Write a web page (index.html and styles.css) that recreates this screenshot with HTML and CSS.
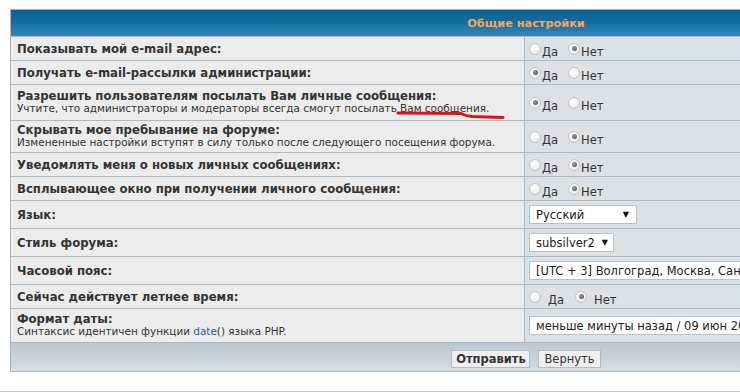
FILE: index.html
```html
<!DOCTYPE html>
<html lang="ru">
<head>
<meta charset="utf-8">
<link rel="stylesheet" href="styles.css">
</head>
<body>
<table class="settings">
  <colgroup><col class="c1"><col class="c2"></colgroup>
  <tr class="h26"><th colspan="2" class="head">Общие настройки</th></tr>
  <tr class="h23">
    <td class="lbl"><b>Показывать мой e-mail адрес:</b></td>
    <td class="val"><span class="opt"><span class="radio"></span>Да</span><span class="opt"><span class="radio on"></span>Нет</span></td>
  </tr>
  <tr class="h23">
    <td class="lbl"><b>Получать e-mail-рассылки администрации:</b></td>
    <td class="val"><span class="opt"><span class="radio on"></span>Да</span><span class="opt"><span class="radio"></span>Нет</span></td>
  </tr>
  <tr class="h35">
    <td class="lbl"><b>Разрешить пользователям посылать Вам личные сообщения:</b><br><span class="explain">Учтите, что администраторы и модераторы всегда смогут посылать Вам сообщения.</span></td>
    <td class="val"><span class="opt"><span class="radio on"></span>Да</span><span class="opt"><span class="radio"></span>Нет</span></td>
  </tr>
  <tr class="h31">
    <td class="lbl"><b>Скрывать мое пребывание на форуме:</b><br><span class="explain">Измененные настройки вступят в силу только после следующего посещения форума.</span></td>
    <td class="val"><span class="opt"><span class="radio"></span>Да</span><span class="opt"><span class="radio on"></span>Нет</span></td>
  </tr>
  <tr class="h23">
    <td class="lbl"><b>Уведомлять меня о новых личных сообщениях:</b></td>
    <td class="val"><span class="opt"><span class="radio"></span>Да</span><span class="opt"><span class="radio on"></span>Нет</span></td>
  </tr>
  <tr class="h23">
    <td class="lbl"><b>Всплывающее окно при получении личного сообщения:</b></td>
    <td class="val"><span class="opt"><span class="radio"></span>Да</span><span class="opt"><span class="radio on"></span>Нет</span></td>
  </tr>
  <tr class="h27">
    <td class="lbl"><b>Язык:</b></td>
    <td class="val"><span class="select lang">Русский<span class="arrow">▼</span></span></td>
  </tr>
  <tr class="h27">
    <td class="lbl"><b>Стиль форума:</b></td>
    <td class="val"><span class="select style">subsilver2<span class="arrow">▼</span></span></td>
  </tr>
  <tr class="h27">
    <td class="lbl"><b>Часовой пояс:</b></td>
    <td class="val"><span class="select wide">[UTC + 3] Волгоград, Москва, Санкт-Петербург</span></td>
  </tr>
  <tr class="h23">
    <td class="lbl"><b>Сейчас действует летнее время:</b></td>
    <td class="val"><span class="opt spaced"><span class="radio"></span>Да</span><span class="opt spaced"><span class="radio on"></span>Нет</span></td>
  </tr>
  <tr class="h33">
    <td class="lbl"><b>Формат даты:</b><br><span class="explain">Синтаксис идентичен функции <a class="link">date</a>() языка PHP.</span></td>
    <td class="val"><span class="select wide date">меньше минуты назад / 09 июн 2014, 12:00</span></td>
  </tr>
  <tr class="h28">
    <td colspan="2" class="foot"><span class="btn main">Отправить</span><span class="btn">Вернуть</span></td>
  </tr>
</table>
<div class="rule"></div>
<svg class="mark" width="740" height="392" viewBox="0 0 740 392"><path d="M398 113 L461 113.5 Q466 116 472 116.5 L503 117.5" fill="none" stroke="#d8141a" stroke-width="3" stroke-linecap="round"/></svg>
</body>
</html>
```

FILE: styles.css
```css
html, body {
  margin: 0;
  overflow: hidden;
  background: #ffffff;
}
body {
  position: relative;
  width: 740px;
  height: 392px;
  padding: 9px 0 0 10px;
  box-sizing: border-box;
  font-family: "DejaVu Sans", Verdana, sans-serif;
  color: #333333;
}
.settings {
  width: 1032px;
  border-collapse: separate;
  border-spacing: 1px;
  background: #a9b8c2;
  table-layout: fixed;
}
.c1 { width: 513px; }
.c2 { width: auto; }
.settings td, .settings th {
  box-sizing: border-box;
  padding: 0;
}
.h26 th { height: 26px; }
.h23 td { height: 23px; }
.h27 td { height: 27px; }
.h28 td { height: 28px; }
.h31 td { height: 31px; }
.h33 td { height: 33px; }
.h35 td { height: 35px; }
.head {
  background: linear-gradient(#08608f 0%, #136fa2 50%, #3587b8 100%);
  color: #ffa34f;
  font-size: 11.3px;
  font-weight: bold;
  text-align: center;
}
.lbl {
  background: #ececec;
  padding-left: 6px !important;
  font-size: 11.7px;
  line-height: 12px;
  color: #333333;
  vertical-align: middle;
  white-space: nowrap;
  overflow: hidden;
}
.explain {
  font-size: 10.45px;
  line-height: 13px;
  color: #333333;
}
.link {
  color: #1d5f91;
}
.val {
  background: #dce1e5;
  padding-left: 4px !important;
  vertical-align: middle;
  font-size: 11.5px;
  color: #333333;
  white-space: nowrap;
  overflow: hidden;
}
.opt {
  display: inline-flex;
  align-items: flex-end;
  margin-right: 10px;
  position: relative;
  top: 2px;
}
.opt.spaced {
  margin-right: 11px;
}
.opt.spaced .radio {
  margin-right: 7px;
}
.radio {
  width: 10px;
  height: 10px;
  border: 1px solid #c2c6c9;
  border-radius: 50%;
  background: radial-gradient(circle at 40% 35%, #ffffff 0%, #eef0f1 60%, #d6d9db 100%);
  margin-right: 1px;
  margin-bottom: 4px;
  position: relative;
}
.radio.on::after {
  content: "";
  position: absolute;
  left: 2.5px;
  top: 2.5px;
  width: 5px;
  height: 5px;
  border-radius: 50%;
  background: radial-gradient(circle at 40% 35%, #9a9a9a 0%, #4a4a4a 100%);
}
.select {
  display: inline-flex;
  align-items: center;
  box-sizing: border-box;
  height: 19px;
  padding-left: 6px;
  background: #ffffff;
  border: 1px solid #b6c1c9;
  font-size: 11.5px;
  color: #222222;
  white-space: nowrap;
  vertical-align: middle;
}
.select.lang {
  width: 108px;
  justify-content: space-between;
  padding-right: 7px;
}
.select.style {
  width: 85px;
  justify-content: space-between;
  padding-right: 5px;
}
.arrow {
  font-size: 8px;
  color: #111111;
}
.select.wide {
  width: 500px;
}
.foot {
  background: linear-gradient(#bfc8d0 0%, #cbd3d9 60%, #d7dde2 100%);
  text-align: center;
  vertical-align: middle;
}
.btn {
  display: inline-block;
  box-sizing: border-box;
  height: 18px;
  line-height: 16px;
  padding: 0 5px;
  margin: 0 4px;
  background: #efefef;
  border: 1px solid #b3bcc3;
  font-size: 11.5px;
  color: #333333;
  position: relative;
  top: 1px;
}
.btn.main {
  font-weight: bold;
  width: 79px;
  padding: 0;
}
.rule {
  position: absolute;
  left: 0;
  top: 391px;
  width: 740px;
  border-top: 1px solid #c8c8c8;
}
.mark {
  position: absolute;
  left: 0;
  top: 0;
  pointer-events: none;
}
```
